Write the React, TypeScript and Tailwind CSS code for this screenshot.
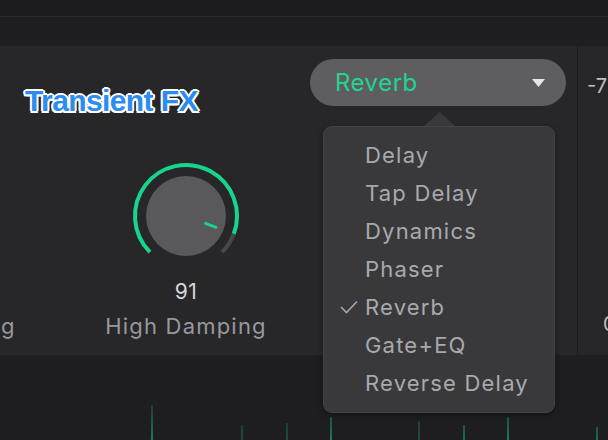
const items = ['Delay', 'Tap Delay', 'Dynamics', 'Phaser', 'Reverb', 'Gate+EQ', 'Reverse Delay'];

const Knob = () => (
  <svg width="120" height="120" viewBox="0 0 120 120">
    <path d="M23.94 96.06 A51 51 0 1 1 107.71 78.03" fill="none" stroke="#17d68c" strokeWidth="4" />
    <path d="M107.71 78.03 A51 51 0 0 1 96.06 96.06" fill="none" stroke="#48484b" strokeWidth="4" />
    <circle cx="60" cy="60" r="40" fill="#59595b" />
    <line x1="79.6" y1="67.4" x2="89.9" y2="71.3" stroke="#17d68c" strokeWidth="3" strokeLinecap="round" />
  </svg>
);

const Spikes = () => (
  <svg width="608" height="85" viewBox="0 0 608 85">
    <defs>
      <linearGradient id="sp" gradientUnits="userSpaceOnUse" x1="0" y1="30" x2="0" y2="85">
        <stop offset="0" stopColor="#1aa878" stopOpacity="0" />
        <stop offset="1" stopColor="#1db982" stopOpacity="1" />
      </linearGradient>
    </defs>
    {[
      [152, 50, 1.2], [242, 70, 0.6], [287, 68, 0.6], [331, 62, 1.2], [419, 66, 0.6], [464, 70, 1], [508, 62, 1.2], [597, 72, 1],
    ].map(([x, y, w], i) => (
      <line key={i} x1={x} y1={y} x2={x} y2={85} stroke="url(#sp)" strokeWidth={w} />
    ))}
  </svg>
);

export default function App() {
  return (
    <div className="relative w-[608px] h-[440px] overflow-hidden bg-[#1d1d20] font-['Inter',sans-serif]">
      <div className="h-[17px] bg-[#1c1c1f] border-b border-[#2a2a2d]" />
      <div className="h-[29px] bg-[#1e1e21]" />

      {/* main panel */}
      <div className="flex h-[309px] bg-[#27272a]">
        <div className="flex-1 flex flex-col overflow-hidden">
          <div className="flex items-start pt-[13px] pr-[11px]">
            <div className="ml-[25px] mt-[27px] font-['Liberation_Sans',sans-serif] font-bold text-[30px] leading-none text-[#2b8cf2] tracking-[-0.6px] [text-shadow:2px_0_0_#fff,-2px_0_0_#fff,0_2px_0_#fff,0_-2px_0_#fff,1.5px_1.5px_0_#fff,-1.5px_-1.5px_0_#fff,1.5px_-1.5px_0_#fff,-1.5px_1.5px_0_#fff]">
              Transient FX
            </div>
            <div className="ml-auto w-[256px] h-[47px] rounded-full bg-[#5e5e60] flex items-center pl-[25px] pr-[21px]">
              <span className="text-[24px] tracking-[0.5px] text-[#1ed690]">Reverb</span>
              <svg className="ml-auto" width="13" height="8" viewBox="0 0 13 8">
                <path d="M0 0 H13 L6.5 8 Z" fill="#e6e6e6" />
              </svg>
            </div>
          </div>

          <div className="flex -ml-[186px] mt-[40px]">
            {['Low Damping', 'High Damping'].map((label, i) => (
              <div key={label} className="w-[248px] shrink-0 flex flex-col items-center">
                <Knob />
                <div className="mt-[2px] text-[21px] leading-[28px] text-[#d8d8d8] tracking-[0.5px]">{i === 1 ? '91' : '40'}</div>
                <div className="mt-[6px] text-[22px] leading-[28px] text-[#99999c] tracking-[1.2px]">{label}</div>
              </div>
            ))}
          </div>
        </div>

        {/* right column */}
        <div className="w-[31px] border-l border-[#1b1b1e] bg-[#262629] flex flex-col overflow-hidden">
          <div className="mt-[30px] ml-[9px] text-[20px] leading-none text-[#bdbdbd] whitespace-nowrap">-72</div>
          <div className="mt-auto mb-[21px] ml-[25px] text-[20px] leading-none text-[#bdbdbd]">0</div>
        </div>
      </div>

      {/* bottom waveform */}
      <div className="h-[85px] bg-[#1e1e21]">
        <Spikes />
      </div>

      {/* dropdown menu */}
      <div className="absolute left-[323px] top-[112px] w-[232px]">
        <svg className="ml-[101px] block" width="31" height="14" viewBox="0 0 31 14">
          <path d="M0 14 L15.5 0 L31 14 Z" fill="#39393c" />
        </svg>
        <div className="h-[287px] rounded-[9px] bg-[#39393c] border border-[#434346] pt-[9px] shadow-[0_2px_6px_rgba(0,0,0,0.4)]">
          {items.map((it) => (
            <div key={it} className="h-[38px] flex items-center">
              <div className="w-[41px] flex justify-end pr-[7px]">
                {it === 'Reverb' && (
                  <svg width="18" height="14" viewBox="0 0 18 14">
                    <path d="M1 7 L6.5 12.5 L17 1.5" fill="none" stroke="#a6a6a9" strokeWidth="1.6" />
                  </svg>
                )}
              </div>
              <span className="text-[22px] tracking-[1.2px] text-[#a9a9ac]">{it}</span>
            </div>
          ))}
        </div>
      </div>
    </div>
  );
}
